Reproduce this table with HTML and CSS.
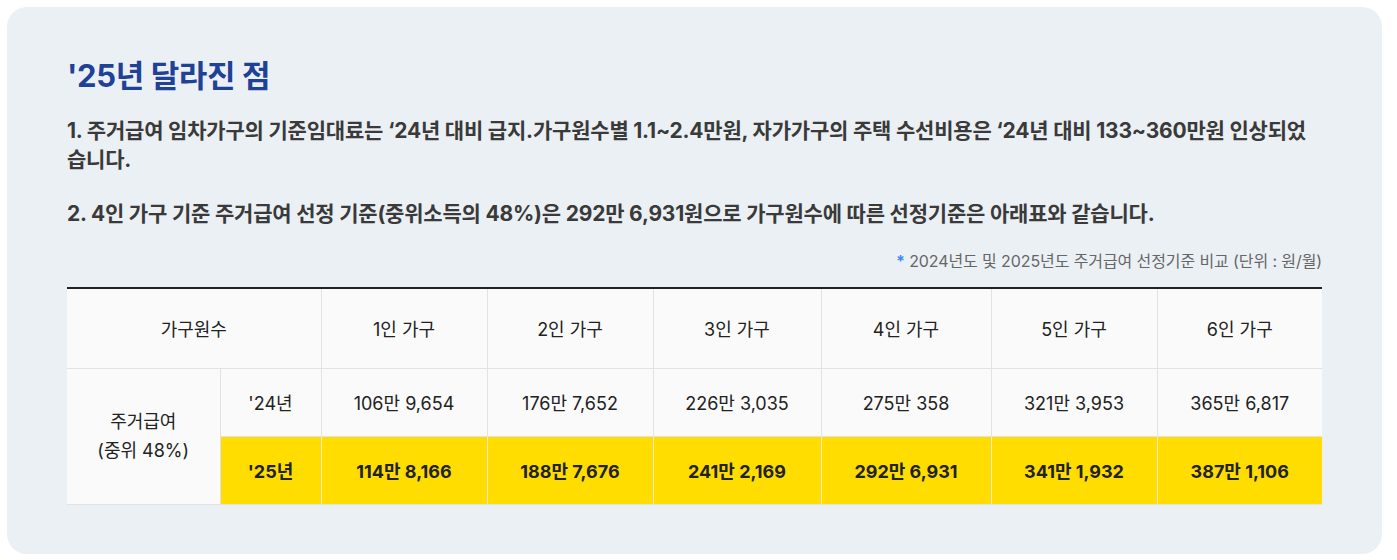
FILE: index.html
```html
<!DOCTYPE html>
<html lang="ko">
<head>
<meta charset="utf-8">
<link rel="stylesheet" href="styles.css">
</head>
<body>
<section class="box">
  <h2 class="title">'25년 달라진 점</h2>
  <p class="para">1. 주거급여 임차가구의 기준임대료는 ‘24년 대비 급지.가구원수별 1.1~2.4만원, 자가가구의 주택 수선비용은 ‘24년 대비 133~360만원 인상되었습니다.</p>
  <p class="para para2">2. 4인 가구 기준 주거급여 선정 기준(중위소득의 48%)은 292만 6,931원으로 가구원수에 따른 선정기준은 아래표와 같습니다.</p>
  <p class="caption"><span class="star">*</span> 2024년도 및 2025년도 주거급여 선정기준 비교 (단위 : 원/월)</p>
  <table class="tbl">
    <colgroup>
      <col class="c1"><col class="c2"><col class="w166"><col class="w166"><col class="w168"><col class="w170"><col class="w166"><col>
    </colgroup>
    <thead>
      <tr>
        <th colspan="2">가구원수</th>
        <th>1인 가구</th>
        <th>2인 가구</th>
        <th>3인 가구</th>
        <th>4인 가구</th>
        <th>5인 가구</th>
        <th>6인 가구</th>
      </tr>
    </thead>
    <tbody>
      <tr>
        <th rowspan="2" class="rowhead">주거급여<br>(중위 48%)</th>
        <td>'24년</td>
        <td>106만 9,654</td>
        <td>176만 7,652</td>
        <td>226만 3,035</td>
        <td>275만 358</td>
        <td>321만 3,953</td>
        <td>365만 6,817</td>
      </tr>
      <tr class="hl">
        <td>'25년</td>
        <td>114만 8,166</td>
        <td>188만 7,676</td>
        <td>241만 2,169</td>
        <td>292만 6,931</td>
        <td>341만 1,932</td>
        <td>387만 1,106</td>
      </tr>
    </tbody>
  </table>
</section>
</body>
</html>
```

FILE: styles.css
```css
* { box-sizing: border-box; }
html, body { margin: 0; padding: 0; background: #ffffff; }
body {
  padding: 7px 15px 7px 7px;
  font-family: Inter, "Noto Sans CJK KR", sans-serif;
  color: #222;
}
.box {
  background: #ebf0f5;
  border-radius: 20px;
  padding: 51px 60px 49px 60px;
}
.title {
  margin: 0;
  font-size: 31px;
  line-height: 36px;
  font-weight: 700;
  color: #1f4196;
  letter-spacing: -0.4px;
}
.para {
  margin: 22px 0 0;
  font-size: 21px;
  line-height: 29px;
  font-weight: 700;
  color: #3a3a3a;
  letter-spacing: -0.2px;
}
.para2 { margin-top: 25px; }
.caption {
  margin: 23px 0 0;
  text-align: right;
  font-size: 16px;
  line-height: 20px;
  color: #666;
  letter-spacing: -0.1px;
}
.star { color: #3d8bf2; font-weight: 700; }
.tbl {
  margin-top: 16px;
  width: 100%;
  border-collapse: collapse;
  table-layout: fixed;
  border-top: 2px solid #222;
  font-size: 18px;
  color: #222;
}
.c1 { width: 153px; }
.c2 { width: 101px; }
.w166 { width: 166px; }
.w168 { width: 168px; }
.w170 { width: 170px; }
.tbl th, .tbl td {
  border: 1px solid #e2e2e2;
  text-align: center;
  font-weight: 400;
  background: #fafafa;
}
.tbl tr > *:first-child { border-left: 0; }
.tbl tr > *:last-child { border-right: 0; }
.tbl thead th { height: 80px; border-top: 0; }
.tbl tbody td { height: 68px; }
.rowhead { line-height: 29px; border-left: 0; }
.tbl tr.hl td {
  background: #ffdd00;
  font-weight: 700;
  border-left-color: #f2eccc;
  border-right-color: #f2eccc;
}
.tbl tr.hl td:first-child { border-left-color: #e2e2e2; }
```
